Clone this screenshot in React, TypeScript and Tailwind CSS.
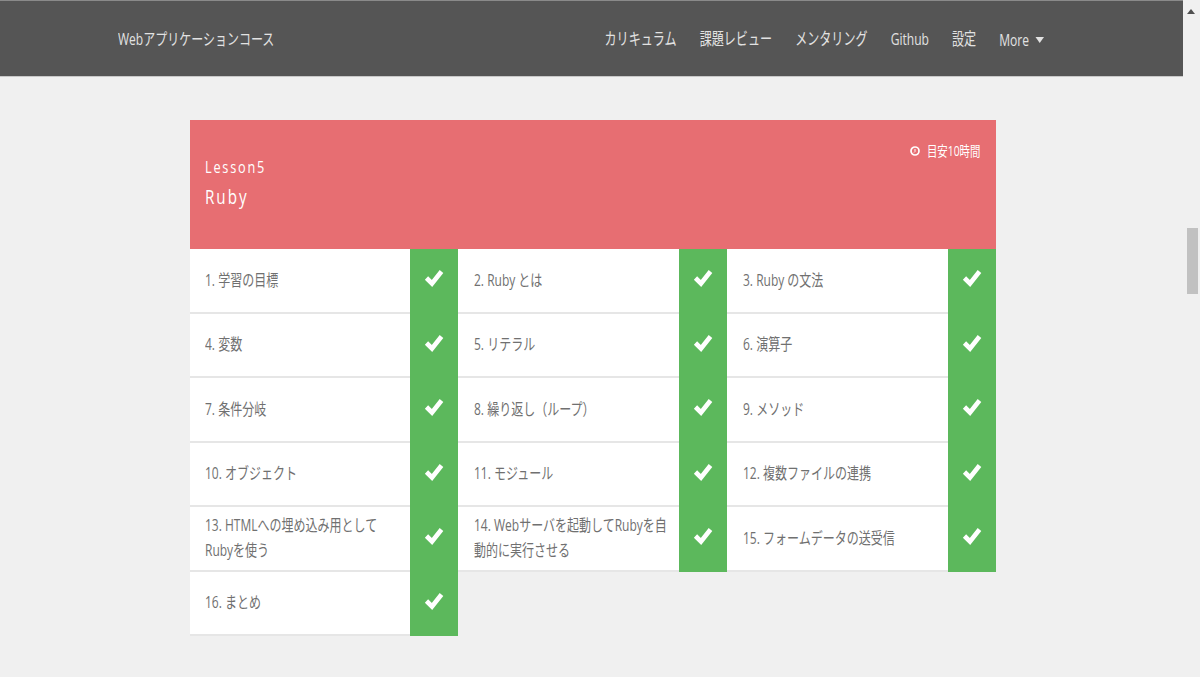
const navItems = ["カリキュラム", "課題レビュー", "メンタリング", "Github", "設定"];

const lessons = [
  ["1. 学習の目標"],
  ["2. Ruby とは"],
  ["3. Ruby の文法"],
  ["4. 変数"],
  ["5. リテラル"],
  ["6. 演算子"],
  ["7. 条件分岐"],
  ["8. 繰り返し（ループ）"],
  ["9. メソッド"],
  ["10. オブジェクト"],
  ["11. モジュール"],
  ["12. 複数ファイルの連携"],
  ["13. HTMLへの埋め込み用として", "Rubyを使う"],
  ["14. Webサーバを起動してRubyを自", "動的に実行させる"],
  ["15. フォームデータの送受信"],
  ["16. まとめ"],
];

function CheckMark() {
  return (
    <svg viewBox="0 0 20 20" className="h-[20px] w-[20px]" fill="none" stroke="currentColor" strokeWidth="4.6">
      <path d="M2.5 10 L8 15.5 L17.5 3.5" />
    </svg>
  );
}

function ClockIcon() {
  return (
    <svg viewBox="0 0 10 10" className="mt-[5px] h-[10px] w-[10px]" fill="none" stroke="currentColor">
      <circle cx="5" cy="5" r="4" strokeWidth="1.7" />
      <path d="M5 3 V5.5 L4 6.5" strokeWidth="1" />
    </svg>
  );
}

function LessonCell({ lines, first }: { lines: string[]; first: boolean }) {
  return (
    <div className="flex h-[64.5px] bg-white">
      <div
        className={`flex min-w-0 flex-1 items-center border-b-2 border-[#e6e6e6] pb-[1px] ${
          first ? "pl-[15px]" : "pl-[15.5px]"
        }`}
      >
        <p className="origin-left scale-x-[.75] whitespace-nowrap text-[16px] leading-[24.5px] text-[#707070]">
          {lines.map((line) => (
            <span key={line} className="block">
              {line}
            </span>
          ))}
        </p>
      </div>
      <div className="flex w-[48px] shrink-0 justify-center bg-[#5cb85c] pt-[19px] text-white">
        <CheckMark />
      </div>
    </div>
  );
}

export default function App() {
  return (
    <div className="relative h-[677px] overflow-hidden bg-[#f0f0f0] font-['Open_Sans','Noto_Sans_CJK_JP',sans-serif]">
      <header className="mr-[17px] flex h-[77px] items-center justify-between border-y border-t-[#8a8a8a] border-b-[#c8c8c8] bg-[#555555] pl-[118px] pr-[139px] text-[#e2e2e2]">
        <a className="origin-left scale-x-[.75] whitespace-nowrap text-[16px]">Webアプリケーションコース</a>
        <nav className="flex origin-right scale-x-[.71] items-center gap-[32.5px] whitespace-nowrap text-[17px]">
          {navItems.map((item) => (
            <a key={item}>{item}</a>
          ))}
          <a className="flex items-center gap-[9px] pt-[2px]">
            More
            <span className="h-0 w-0 border-x-[6px] border-t-[6px] border-x-transparent border-t-[#e2e2e2]" />
          </a>
        </nav>
      </header>

      <main className="ml-[190px] mt-[43px] w-[806px]">
        <div className="flex h-[129px] justify-between bg-[#e76e72] px-[15px] text-white">
          <div className="pt-[35px]">
            <p className="origin-left scale-x-[.795] text-[16px] leading-[24px] tracking-[.14em]">Lesson5</p>
            <p className="mt-[4px] origin-left scale-x-[.76] text-[20px] leading-[28px] tracking-[.13em]">Ruby</p>
          </div>
          <div className="flex items-start gap-[7px] pt-[21px]">
            <ClockIcon />
            <span className="w-[54px] origin-left scale-x-[.74] whitespace-nowrap text-[14px] leading-[20px]">目安10時間</span>
          </div>
        </div>
        <div className="grid grid-cols-[268px_269px_269px]">
          {lessons.map((lines, i) => (
            <LessonCell key={lines[0]} lines={lines} first={i % 3 === 0} />
          ))}
        </div>
      </main>

      {/* browser scrollbar */}
      <div className="absolute right-0 top-0 h-full w-[17px] bg-[#f0f0f0]">
        <span className="absolute left-[4px] top-[9px] h-0 w-0 border-x-[4px] border-b-[5px] border-x-transparent border-b-[#505050]" />
        <div className="absolute left-[4px] top-[228px] h-[66px] w-[11px] bg-[#c1c1c1]" />
      </div>
    </div>
  );
}
